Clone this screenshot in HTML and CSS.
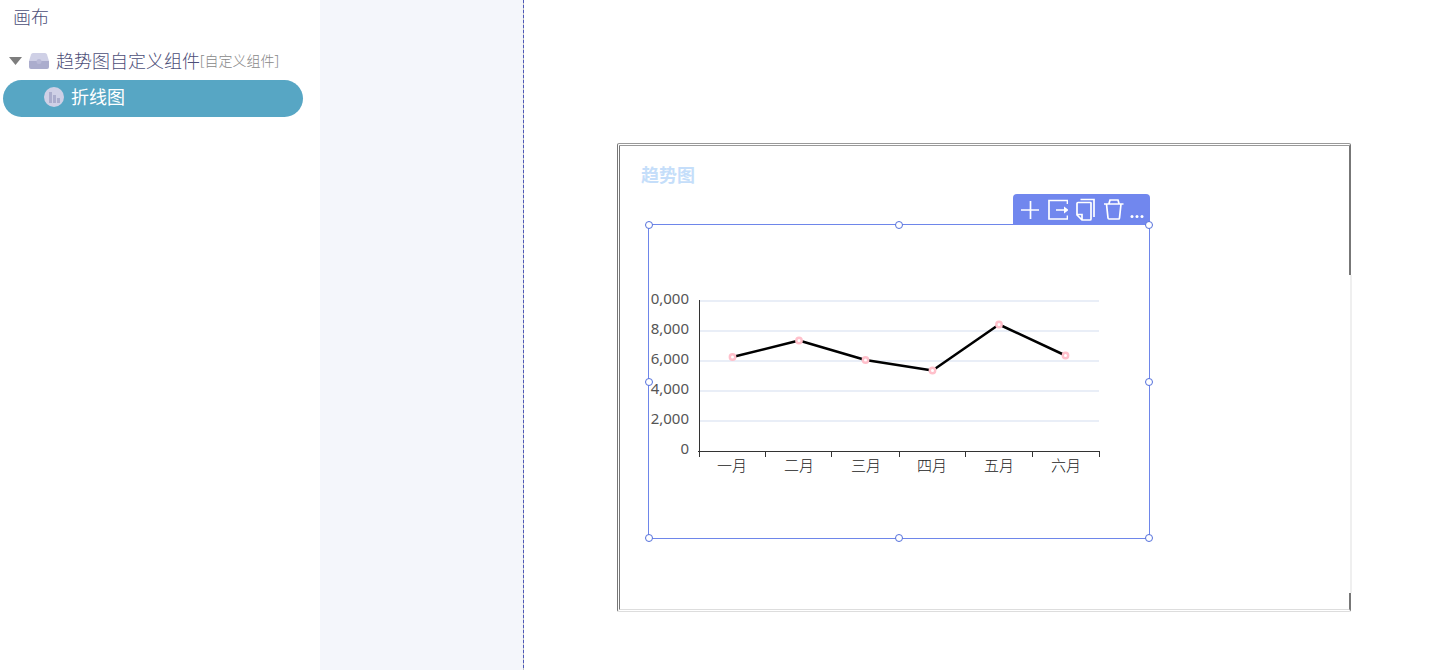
FILE: index.html
```html
<!DOCTYPE html>
<html lang="zh-CN">
<head>
<meta charset="utf-8">
<title>画布</title>
<link rel="stylesheet" href="styles.css">
</head>
<body>
<div class="editor">
  <aside class="sidebar">
    <h1 class="sidebar-title">画布</h1>
    <ul class="tree">
      <li class="tree-row">
        <button class="toggle" aria-label="折叠"></button>
        <svg class="tree-icon" viewBox="0 0 20 16" aria-hidden="true">
          <path d="M4 0h12q1.500 0 2 1.500L20 8v2H0V8l2-6.500Q2.500 0 4 0z" fill="#cfd0e6"/>
          <path d="M0 8h6.500a3.500 3.500 0 0 0 7 0H20v6q0 2-2 2H2q-2 0-2-2z" fill="#abadcd"/>
          <path d="M6 8h8v4H6z" fill="#abadcd"/>
          <circle cx="10" cy="8.500" r="2.500" fill="#b9bad7"/>
        </svg>
        <span class="tree-name">趋势图自定义组件</span>
        <span class="tree-tag">[自定义组件]</span>
      </li>
      <li class="tree-row tree-child selected">
        <svg class="child-icon" viewBox="0 0 20 20" aria-hidden="true">
          <circle cx="10" cy="10" r="10" fill="#cfd0e6"/>
          <path d="M5 5h3v11H5zM9 8h3v8H9zM13 11h3v5h-3z" fill="#abadcd"/>
        </svg>
        <span class="tree-name">折线图</span>
      </li>
    </ul>
  </aside>
  <div class="gutter"></div>
  <main class="canvas">
    <section class="widget">
      <h2 class="widget-title">趋势图</h2>
      <div class="widget-edge"></div>
      <div class="selection">
        <svg class="chart" viewBox="0 0 500 313" role="img" aria-label="折线图">
          <path class="grid" d="M51 76H450M51 106H450M51 136H450M51 166H450M51 196H450"/>
          <path class="axis" d="M50.500 75V232M49 226.500H451M116.500 226v6M182.500 226v6M250.500 226v6M316.500 226v6M383.500 226v6M450.500 226v6"/>
          <g class="y-labels">
            <text x="40" y="79">0,000</text>
            <text x="40" y="109">8,000</text>
            <text x="40" y="139">6,000</text>
            <text x="40" y="169">4,000</text>
            <text x="40" y="199">2,000</text>
            <text x="40" y="229">0</text>
          </g>
          <g class="x-labels">
            <text x="83" y="246">一月</text>
            <text x="150" y="246">二月</text>
            <text x="217" y="246">三月</text>
            <text x="283" y="246">四月</text>
            <text x="350" y="246">五月</text>
            <text x="417" y="246">六月</text>
          </g>
          <path class="line" d="M83.500 132L150 115.500L216.500 135L283.500 145.500L350 99.500L416.500 130.500"/>
          <g class="points">
            <circle cx="83.500" cy="132" r="2.700"/>
            <circle cx="150" cy="115.500" r="2.700"/>
            <circle cx="216.500" cy="135" r="2.700"/>
            <circle cx="283.500" cy="145.500" r="2.700"/>
            <circle cx="350" cy="99.500" r="2.700"/>
            <circle cx="416.500" cy="130.500" r="2.700"/>
          </g>
        </svg>
        <div class="toolbar">
          <button aria-label="添加"><svg viewBox="0 0 20 24"><path d="M10.500 3v18M1 12h18"/></svg></button>
          <button aria-label="导出"><svg viewBox="0 0 20 24"><path d="M19.500 6V2.500H1v18.500h18.500v-3.500M8 12h9"/><path d="M16 8.500l4.500 3.500-4.500 3.500z" fill="#fff" stroke="none"/></svg></button>
          <button aria-label="复制"><svg viewBox="0 0 20 24"><path d="M5 4.500h9.500q.500 0 .500.500v16q0 1-1 1H6L1 17V5.500q0-1 1-1zM1.500 16.500H6V22M4.500 1.500H18V19"/></svg></button>
          <button aria-label="删除"><svg viewBox="0 0 20 24"><path d="M0 6h19.500M5 5.500l1-3.500h8l1 3.500M2.500 6L4 20q.100 1 1 1h9.500q1 0 1-1L17 6"/></svg></button>
          <button class="more" aria-label="更多"><svg viewBox="0 0 14 24"><circle cx="2" cy="18.500" r="1.500"/><circle cx="7" cy="18.500" r="1.500"/><circle cx="12" cy="18.500" r="1.500"/></svg></button>
        </div>
        <i class="handle top left"></i><i class="handle top center"></i><i class="handle top right"></i>
        <i class="handle middle left"></i><i class="handle middle right"></i>
        <i class="handle bottom left"></i><i class="handle bottom center"></i><i class="handle bottom right"></i>
      </div>
    </section>
  </main>
</div>
</body>
</html>
```
FILE: styles.css
```css
* { box-sizing: border-box; }
body {
  margin: 0;
  background: #fff;
  color: #4c4e78;
  font-family: "Noto Sans", "Noto Sans CJK SC", sans-serif;
}
button { border: 0; padding: 0; background: none; cursor: pointer; }
.editor { display: flex; min-height: 100vh; }

.sidebar { flex: none; width: 320px; }
.sidebar-title { margin: 0; padding: 4px 13px 0; font-size: 18px; line-height: 26px; font-weight: 300; }
.tree { list-style: none; margin: 0; padding: 12px 17px 0 3px; }
.tree-row { display: flex; align-items: center; height: 38px; padding-left: 6px; white-space: nowrap; }
.toggle {
  width: 13px;
  height: 8px;
  margin-right: 7px;
  background: #7d7d7d;
  clip-path: polygon(0 0, 100% 0, 50% 100%);
}
.tree-icon { width: 20px; height: 16px; margin-right: 7px; }
.tree-name { font-size: 18px; line-height: 26px; font-weight: 300; }
.tree-tag { font-size: 14px; line-height: 20px; font-weight: 300; color: #888; }
.tree-child { height: 37px; padding: 0 0 3px 41px; border-radius: 19px; }
.tree-child.selected { background: #57a6c4; color: #fff; }
.tree-child .tree-name { font-weight: 400; }
.child-icon { width: 20px; height: 20px; margin-right: 7px; }

.gutter {
  flex: none;
  width: 204px;
  background: repeating-linear-gradient(#4d58b8 0 3px, #c4c4c4 3px 5px) right / 1px 100% no-repeat #f4f6fb;
}

.canvas { position: relative; flex: 1; min-width: 0; }
.widget {
  position: absolute;
  left: 93px;
  top: 143px;
  width: 734px;
  height: 469px;
  padding: 16px 21px;
  border: 3px double #999;
  border-left-color: #777;
  border-right: 2px solid #777;
  border-bottom-color: #ddd;
  border-radius: 2px;
}
.widget-title { margin: 0; font-size: 18px; line-height: 26px; font-weight: 700; color: #c5defa; }
.widget-edge {
  position: absolute;
  right: -3px;
  top: 129px;
  bottom: 16px;
  width: 3px;
  background: linear-gradient(90deg, #fff 1px, #efefef 1px);
}
.selection {
  position: absolute;
  left: 28px;
  top: 78px;
  width: 502px;
  height: 315px;
  border: 1px solid #6e86ea;
}
.chart { display: block; width: 100%; height: 100%; }
.grid { stroke: #e9eef7; stroke-width: 2; }
.axis { fill: none; stroke: #333; stroke-width: 1; }
.y-labels { font-size: 15px; fill: #555; text-anchor: end; }
.x-labels { font-size: 15px; font-weight: 300; fill: #222; text-anchor: middle; }
.line { fill: none; stroke: #000; stroke-width: 2.5; stroke-linejoin: round; }
.points { fill: #fff; stroke: #ffc0cb; stroke-width: 2.4; }

.toolbar {
  position: absolute;
  right: -1px;
  bottom: 100%;
  display: flex;
  align-items: center;
  gap: 8px;
  height: 31px;
  padding: 0 6px 0 7px;
  border-radius: 4px 4px 0 0;
  background: #7187ee;
}
.toolbar button { height: 24px; }
.toolbar svg { display: block; width: 20px; height: 24px; fill: none; stroke: #fff; stroke-width: 1.7; }
.toolbar .more { margin-left: -2px; }
.toolbar .more svg { width: 14px; fill: #fff; stroke: none; }

.handle {
  position: absolute;
  width: 8px;
  height: 8px;
  border: 1px solid #5470dc;
  border-radius: 50%;
  background: #fff;
}
.top { top: -4px; }
.middle { top: calc(50% - 4px); }
.bottom { bottom: -4px; }
.left { left: -4px; }
.center { left: calc(50% - 4px); }
.right { right: -4px; }
```
